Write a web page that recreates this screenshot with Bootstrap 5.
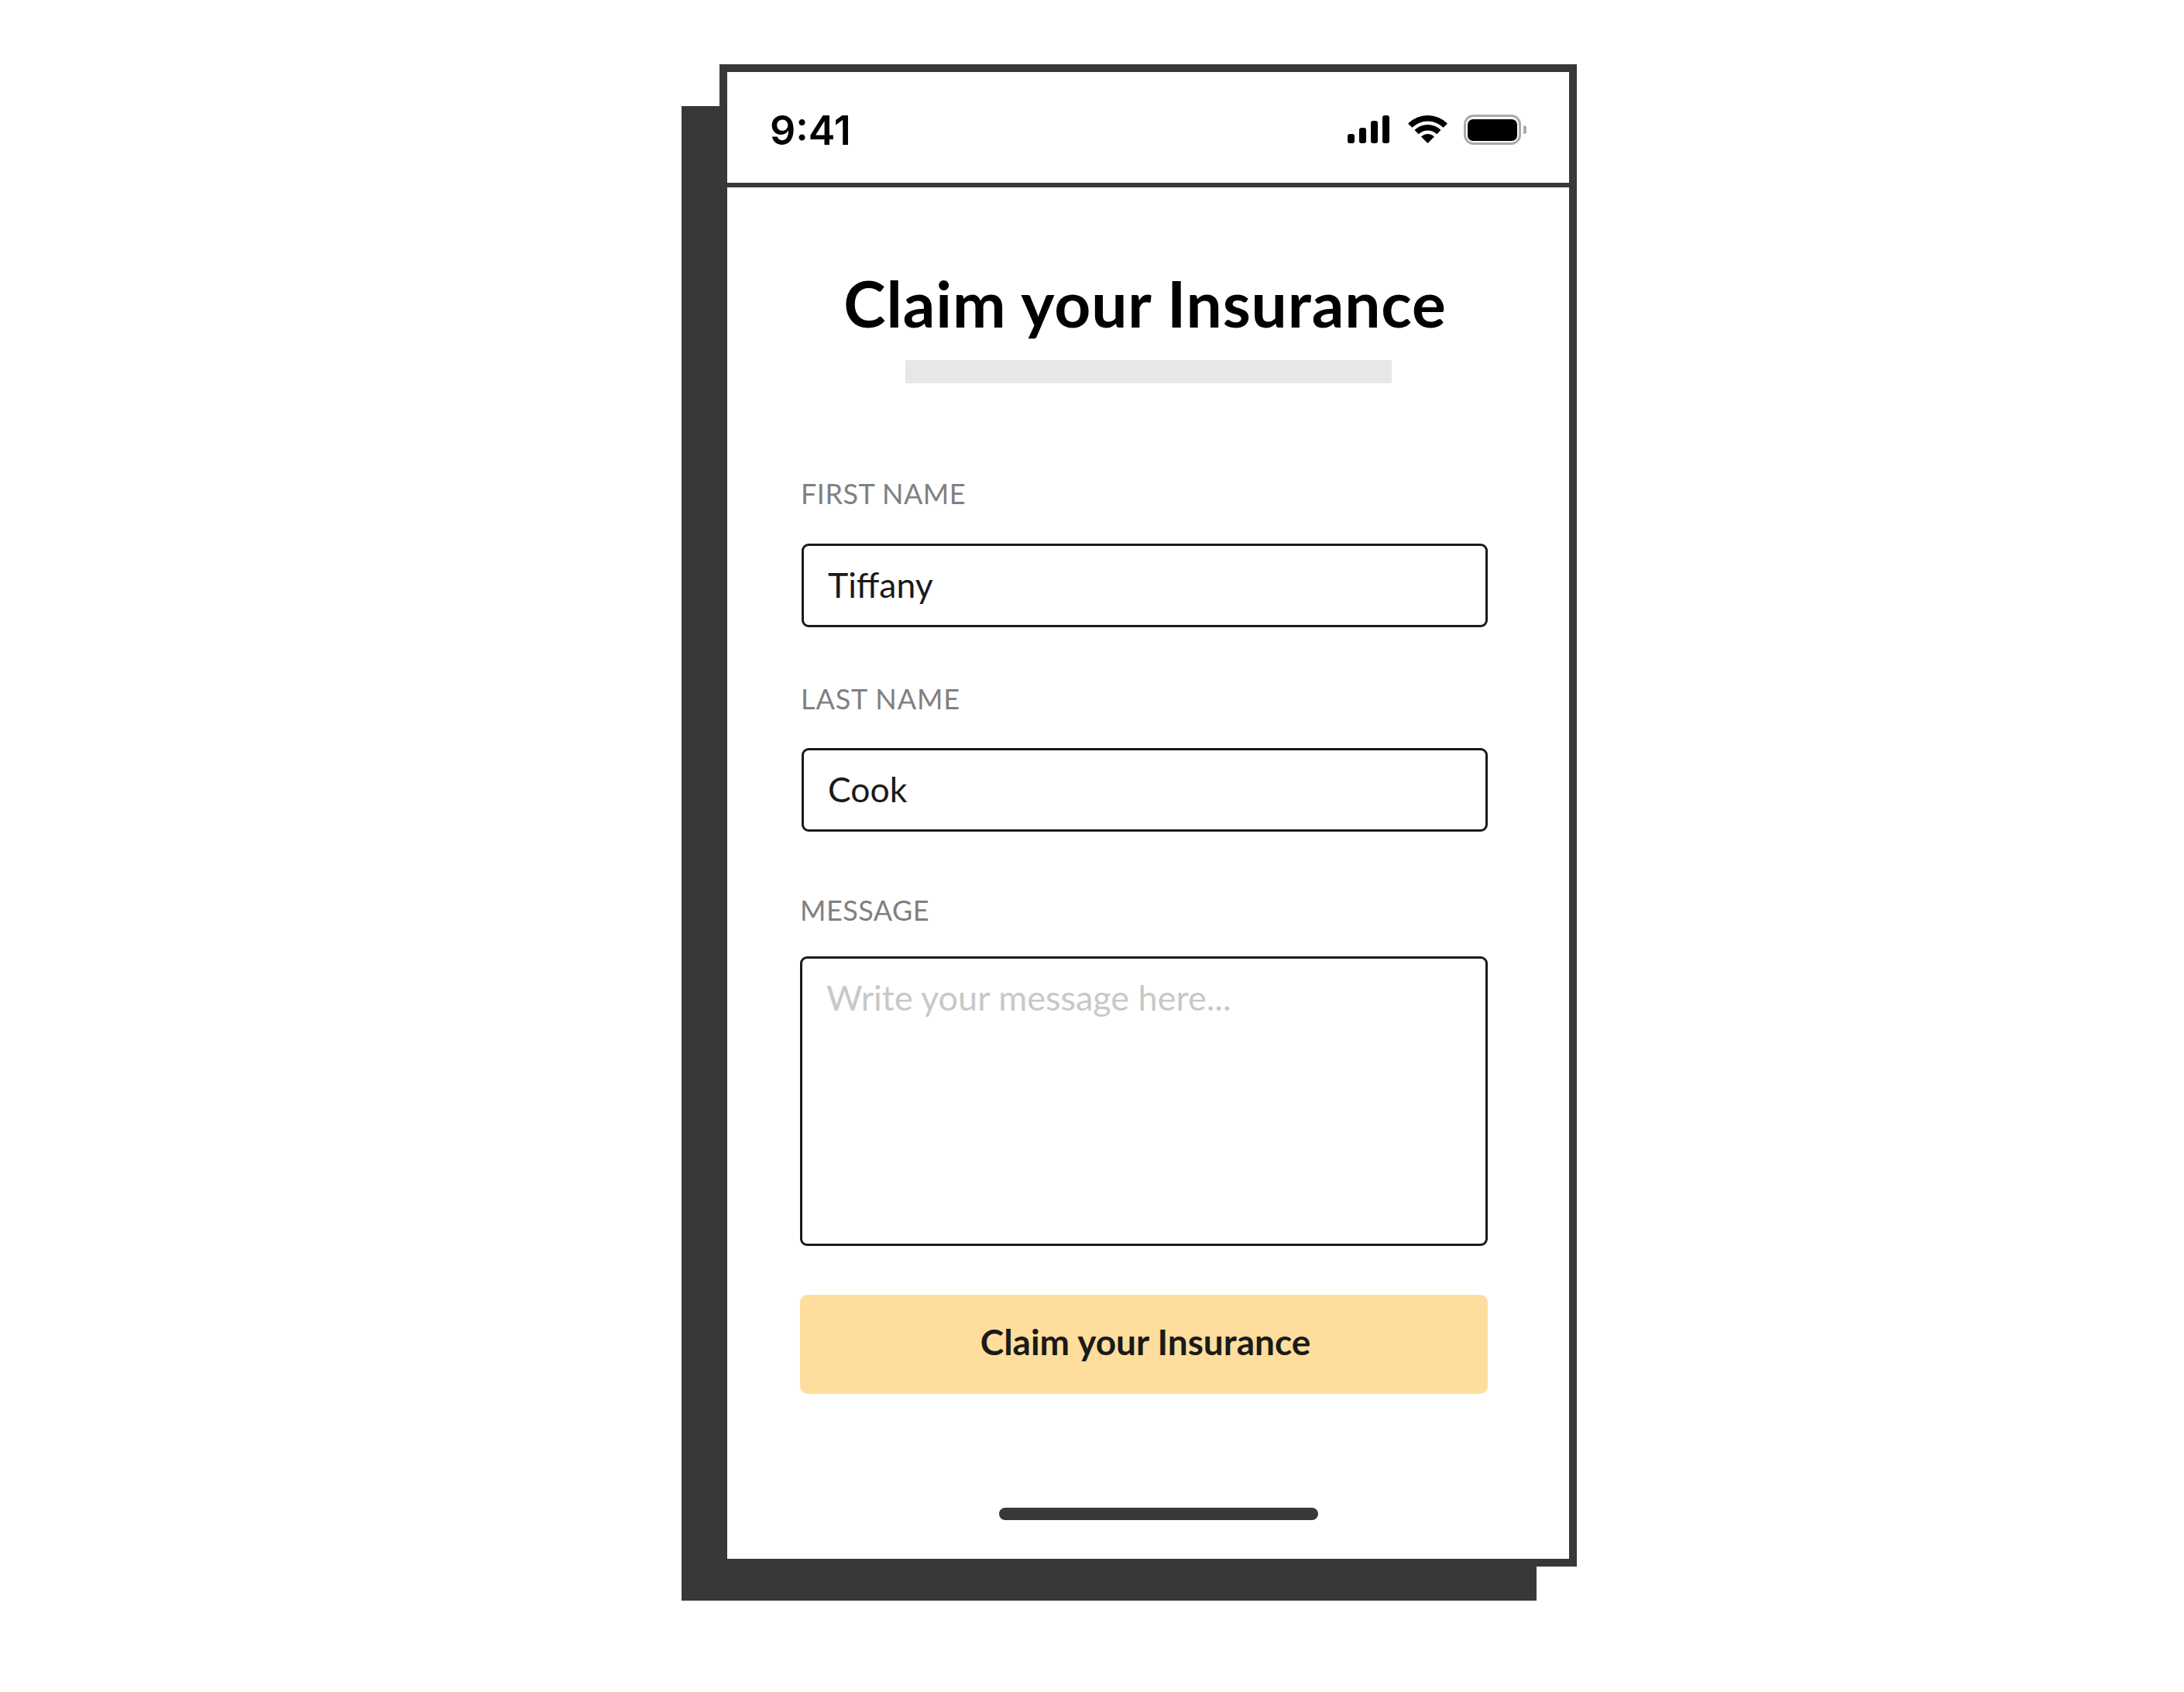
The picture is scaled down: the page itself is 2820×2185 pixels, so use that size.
<!doctype html>
<html lang="en">
<head>
<meta charset="utf-8">
<title>Claim your Insurance</title>
<link rel="stylesheet" href="https://cdn.jsdelivr.net/npm/bootstrap@5.3.0/dist/css/bootstrap.min.css">
<style>
html, body { background: #fff; margin: 0; }
body { font-family: "Lato", "Liberation Sans", sans-serif; color: #000; }
.stage { position: relative; z-index: 0; padding: 83px 0 118px 929px; min-height: 2185px; }
.phone { position: relative; width: 1107px; height: 1940px; border: 10px solid #383838; background: #fff; }
.phone-shade { position: absolute; left: -59px; top: 44px; width: 1104px; height: 1930px; background: #383838; z-index: -1; }
.status { height: 149px; border-bottom: 6px solid #383838; padding: 5px 55px 0 55px; }
.clock { font-family: "Inter", "Liberation Sans", sans-serif; font-size: 52px; font-weight: 600; line-height: 1; letter-spacing: 0; padding-top: 3px; }
.heading { font-size: 82px; font-weight: 700; line-height: 96px; margin: 101px 0 0; padding-right: 8px; letter-spacing: .9px; color: #000; }
.sub-bar { width: 628px; height: 30px; margin: 26px auto 0; background: #e6e7e8; }
.claim-form { padding: 124px 0 0 94px; }
.fld-label { display: block; font-size: 36px; line-height: 36px; color: #808080; text-transform: uppercase; margin: 0 0 47px 1px; letter-spacing: .5px; }
.fld-input.form-control { display: block; width: 886px; margin-left: 2px; height: 108px; border: 3px solid #1a1a1a; border-radius: 9px; padding: 0 31px 3px; font-size: 44.5px; color: #1a1a1a; font-family: inherit; box-shadow: none; }
.fld-gap { margin-top: 74px; }
.fld-gap .fld-label { margin-bottom: 46px; letter-spacing: .9px; }
.msg-gap { margin-top: 83px; }
.msg-gap .fld-label { margin: 0 0 42px 0; }
.msg-input.form-control { display: block; width: 888px; height: 374px; border: 3px solid #1a1a1a; border-radius: 9px; padding: 23px 31px; font-size: 45px; line-height: 1.2; font-family: inherit; resize: none; box-shadow: none; }
.msg-input::placeholder { color: #c8c8c8; opacity: 1; }
.claim-btn.btn { display: block; width: 888px; height: 128px; margin: 63px 0 0 0; background: #ffdd9c; border: 0; border-radius: 10px; color: #1a1a1a; font-size: 46px; font-weight: 700; padding: 0 0 7px 4px; }
.home-bar { width: 412px; height: 16px; margin: 147px 0 0 351px; background: #383838; border-radius: 8px; }
.gauge { gap: 24px; }
.gauge-bat { margin-left: -3px; }
</style>
</head>
<body>
<div class="stage">
  <div class="phone">
    <div class="phone-shade"></div>
    <div class="status d-flex justify-content-between align-items-center">
      <span class="clock">9:41</span>
      <div class="gauge d-flex align-items-center">
        <svg width="54" height="36" viewBox="0 0 54 36" aria-hidden="true"><g fill="#000"><rect x="0" y="24" width="9" height="12" rx="3"/><rect x="15" y="16" width="9" height="20" rx="3"/><rect x="30" y="7" width="9" height="29" rx="3"/><rect x="45" y="0" width="9" height="36" rx="3"/></g></svg>
        <svg width="51" height="36" viewBox="0 0 51 36" aria-hidden="true"><path fill="#000" d="M.04 10.54A36 36 0 0 1 50.96 10.54L45.65 15.85A28.5 28.5 0 0 0 5.35 15.85ZM8.53 19.03A24 24 0 0 1 42.47 19.03L37.17 24.33A16.5 16.5 0 0 0 13.83 24.33ZM17.01 27.51A12 12 0 0 1 33.99 27.51L25.5 36Z"/></svg>
        <svg class="gauge-bat" width="81" height="39" viewBox="0 0 81 39" aria-hidden="true"><rect x="1.5" y="1.5" width="71" height="36" rx="11" fill="none" stroke="#aaa" stroke-width="3"/><rect x="5" y="6" width="64" height="28" rx="7" fill="#000"/><path fill="#aaa" d="M77 14a5 5 0 0 1 0 11Z"/></svg>
      </div>
    </div>
    <h1 class="heading text-center">Claim your Insurance</h1>
    <div class="sub-bar"></div>
    <form class="claim-form">
      <div>
        <label class="fld-label" for="f1">First name</label>
        <input id="f1" class="form-control fld-input" type="text" value="Tiffany">
      </div>
      <div class="fld-gap">
        <label class="fld-label" for="f2">Last name</label>
        <input id="f2" class="form-control fld-input" type="text" value="Cook">
      </div>
      <div class="msg-gap">
        <label class="fld-label" for="f3">Message</label>
        <textarea id="f3" class="form-control msg-input" placeholder="Write your message here..."></textarea>
      </div>
      <button type="button" class="btn claim-btn">Claim your Insurance</button>
    </form>
    <div class="home-bar"></div>
  </div>
</div>
<script src="https://cdn.jsdelivr.net/npm/bootstrap@5.3.0/dist/js/bootstrap.bundle.min.js"></script>
</body>
</html>
